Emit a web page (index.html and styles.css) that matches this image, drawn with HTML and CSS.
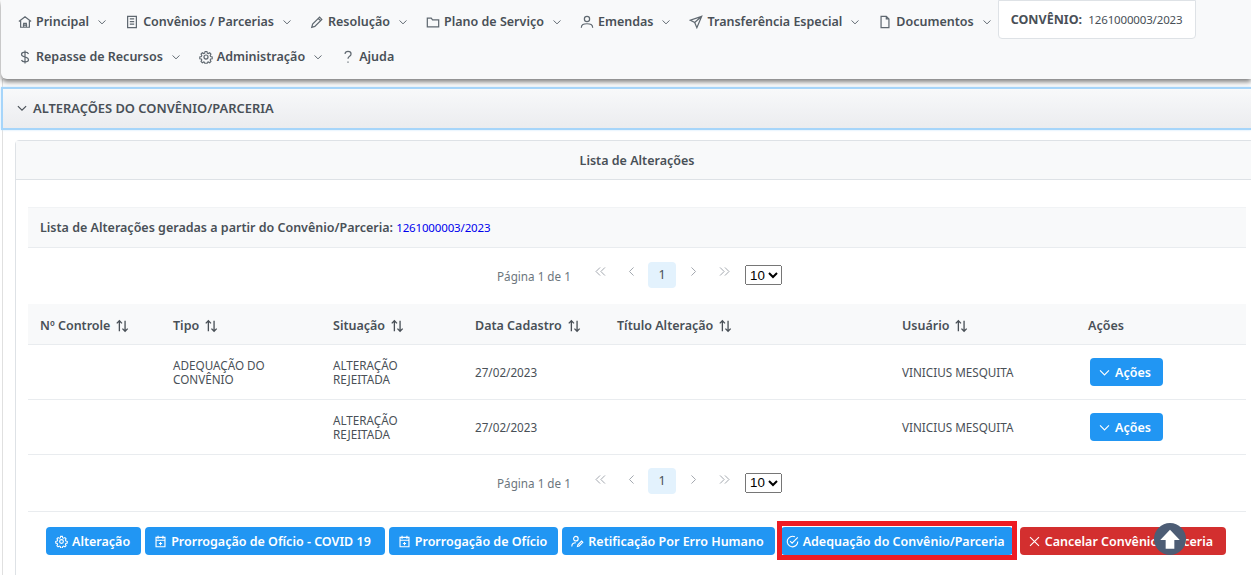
FILE: index.html
```html
<!DOCTYPE html>
<html lang="pt-BR">
<head>
    <meta charset="utf-8">
    <title>Alterações do Convênio/Parceria</title>
    <link rel="stylesheet" href="styles.css">
</head>
<body>
    <svg class="sprite" xmlns="http://www.w3.org/2000/svg">
        <symbol id="i-down" viewBox="0 0 16 16"><path d="M2.500 5.500 8 11l5.500-5.500"/></symbol>
        <symbol id="i-home" viewBox="0 0 16 16"><path d="M1 7.500 8 2l7 5.500M3 6.500V14h10V6.500M6.500 14V9.500h3V14M5.500 11.500h5"/></symbol>
        <symbol id="i-book" viewBox="0 0 16 16"><path d="M3 1.500h10v13H3zM5.500 4.500h5M5.500 7.500h5M5.500 10.500h5"/></symbol>
        <symbol id="i-pencil" viewBox="0 0 16 16"><path d="M11 2.500 13.500 5 5.500 13 2 14l1-3.500zM9.500 4 12 6.500"/></symbol>
        <symbol id="i-folder" viewBox="0 0 16 16"><path d="M1.500 3.500h4.500l1.500 2h7v8h-13z"/></symbol>
        <symbol id="i-user" viewBox="0 0 16 16"><circle cx="8" cy="4.500" r="3"/><path d="M1.500 14.500c0-3.500 2.500-4.500 6.500-4.500s6.500 1 6.500 4.500"/></symbol>
        <symbol id="i-send" viewBox="0 0 16 16"><path d="M14.500 1.500 1.500 6l5 2.500 2.500 6zM6.500 8.500l8-7"/></symbol>
        <symbol id="i-file" viewBox="0 0 16 16"><path d="M3.500 1.500h6l3 3v10h-9zM9.500 1.500v3h3"/></symbol>
        <symbol id="i-dollar" viewBox="0 0 16 16"><path d="M12 4.500C11.500 3 10 2.500 8 2.500 5.500 2.500 4 3.500 4 5s1.500 2.300 4 3c2.500.7 4 1.500 4 3s-1.500 2.500-4 2.500c-2 0-3.500-.5-4-2M8 .5v15"/></symbol>
        <symbol id="i-cog" viewBox="0 0 16 16"><circle cx="8" cy="8" r="2.300"/><path d="M6.800 1h2.400l.4 2 1.300.6 1.800-1 1.600 1.700-1 1.700.6 1.300 2 .5v2.400l-2 .4-.6 1.300 1 1.800-1.600 1.600-1.800-1-1.300.6-.4 2H6.800l-.4-2-1.300-.6-1.800 1-1.600-1.600 1-1.800-.6-1.300-2-.4V7.800l2-.5.6-1.300-1-1.700 1.600-1.700 1.800 1 1.300-.6z" transform="translate(.8 .8) scale(.9)"/></symbol>
        <symbol id="i-question" viewBox="0 0 16 16"><path d="M4.500 4.500C4.800 2.500 6.200 1.500 8 1.500c2 0 3.500 1.300 3.500 3 0 1.500-.8 2.200-2 3-1 .7-1.500 1.300-1.500 2.500M8 13v1.500"/></symbol>
        <symbol id="i-cal" viewBox="0 0 16 16"><path d="M2.500 3h11v11.500h-11zM2.500 6.500h11M5 1v3.500M11 1v3.500M8 8.500v4M6 10.500h4"/></symbol>
        <symbol id="i-useredit" viewBox="0 0 16 16"><circle cx="6" cy="4.500" r="2.800"/><path d="M1 14c0-3 1.500-4.500 5-4.500M8 14l.5-2 4.500-4.500 1.500 1.500-4.500 4.500z"/></symbol>
        <symbol id="i-check" viewBox="0 0 16 16"><path d="M14.500 8A6.500 6.500 0 1 1 11 2.300M5 7.500l2.500 2.500 7-7"/></symbol>
        <symbol id="i-times" viewBox="0 0 16 16"><path d="m2.500 2.500 11 11M13.500 2.500l-11 11"/></symbol>
        <symbol id="i-first" viewBox="0 0 16 16"><path d="M7.500 3 2.500 8l5 5M13.500 3l-5 5 5 5"/></symbol>
        <symbol id="i-prev" viewBox="0 0 16 16"><path d="M10.500 3l-5 5 5 5"/></symbol>
        <symbol id="i-next" viewBox="0 0 16 16"><path d="M5.500 3l5 5-5 5"/></symbol>
        <symbol id="i-last" viewBox="0 0 16 16"><path d="M2.500 3l5 5-5 5M8.500 3l5 5-5 5"/></symbol>
        <symbol id="i-sort" viewBox="0 0 16 16"><path d="M5 14V2M2 5l3-3 3 3M11.500 2v12M8.500 11l3 3 3-3"/></symbol>
    </svg>

    <nav class="menu">
        <a class="menu-item"><svg class="ico"><use href="#i-home"/></svg>Principal<svg class="caret"><use href="#i-down"/></svg></a>
        <a class="menu-item"><svg class="ico"><use href="#i-book"/></svg>Convênios / Parcerias<svg class="caret"><use href="#i-down"/></svg></a>
        <a class="menu-item"><svg class="ico"><use href="#i-pencil"/></svg>Resolução<svg class="caret"><use href="#i-down"/></svg></a>
        <a class="menu-item"><svg class="ico"><use href="#i-folder"/></svg>Plano de Serviço<svg class="caret"><use href="#i-down"/></svg></a>
        <a class="menu-item"><svg class="ico"><use href="#i-user"/></svg>Emendas<svg class="caret"><use href="#i-down"/></svg></a>
        <a class="menu-item"><svg class="ico"><use href="#i-send"/></svg>Transferência Especial<svg class="caret"><use href="#i-down"/></svg></a>
        <a class="menu-item"><svg class="ico"><use href="#i-file"/></svg>Documentos<svg class="caret"><use href="#i-down"/></svg></a>
        <div class="menu-tab"><b>CONVÊNIO:</b> <span class="code">1261000003/2023</span></div>
        <a class="menu-item"><svg class="ico"><use href="#i-dollar"/></svg>Repasse de Recursos<svg class="caret"><use href="#i-down"/></svg></a>
        <a class="menu-item"><svg class="ico"><use href="#i-cog"/></svg>Administração<svg class="caret"><use href="#i-down"/></svg></a>
        <a class="menu-item"><svg class="ico"><use href="#i-question"/></svg>Ajuda</a>
    </nav>

    <main class="content">
        <div class="section-bar"><svg class="section-caret"><use href="#i-down"/></svg>ALTERAÇÕES DO CONVÊNIO/PARCERIA</div>

        <section class="card">
            <h2 class="card-head">Lista de Alterações</h2>
            <div class="card-body">
                <div class="info">Lista de Alterações geradas a partir do Convênio/Parceria: <a class="info-link code">1261000003/2023</a></div>

                <div class="pager">
                    <span class="pager-label">Página 1 de 1</span>
                    <svg class="pager-ico"><use href="#i-first"/></svg>
                    <svg class="pager-ico"><use href="#i-prev"/></svg>
                    <span class="pager-num">1</span>
                    <svg class="pager-ico"><use href="#i-next"/></svg>
                    <svg class="pager-ico"><use href="#i-last"/></svg>
                    <select class="pager-size"><option>10</option></select>
                </div>

                <table class="grid">
                    <thead>
                        <tr>
                            <th class="col-num">Nº Controle<svg class="sort"><use href="#i-sort"/></svg></th>
                            <th class="col-type">Tipo<svg class="sort"><use href="#i-sort"/></svg></th>
                            <th class="col-state">Situação<svg class="sort"><use href="#i-sort"/></svg></th>
                            <th class="col-date">Data Cadastro<svg class="sort"><use href="#i-sort"/></svg></th>
                            <th class="col-title">Título Alteração<svg class="sort"><use href="#i-sort"/></svg></th>
                            <th class="col-user">Usuário<svg class="sort"><use href="#i-sort"/></svg></th>
                            <th class="col-act">Ações</th>
                        </tr>
                    </thead>
                    <tbody>
                        <tr>
                            <td></td>
                            <td>ADEQUAÇÃO DO CONVÊNIO</td>
                            <td>ALTERAÇÃO REJEITADA</td>
                            <td>27/02/2023</td>
                            <td></td>
                            <td>VINICIUS MESQUITA</td>
                            <td class="cell-act"><button class="btn btn-act"><svg class="btn-ico"><use href="#i-down"/></svg>Ações</button></td>
                        </tr>
                        <tr>
                            <td></td>
                            <td></td>
                            <td>ALTERAÇÃO REJEITADA</td>
                            <td>27/02/2023</td>
                            <td></td>
                            <td>VINICIUS MESQUITA</td>
                            <td class="cell-act"><button class="btn btn-act"><svg class="btn-ico"><use href="#i-down"/></svg>Ações</button></td>
                        </tr>
                    </tbody>
                </table>

                <div class="pager pager-bottom">
                    <span class="pager-label">Página 1 de 1</span>
                    <svg class="pager-ico"><use href="#i-first"/></svg>
                    <svg class="pager-ico"><use href="#i-prev"/></svg>
                    <span class="pager-num">1</span>
                    <svg class="pager-ico"><use href="#i-next"/></svg>
                    <svg class="pager-ico"><use href="#i-last"/></svg>
                    <select class="pager-size"><option>10</option></select>
                </div>

                <div class="actions">
                    <button class="btn"><svg class="btn-ico"><use href="#i-cog"/></svg>Alteração</button>
                    <button class="btn btn-wide"><svg class="btn-ico"><use href="#i-cal"/></svg>Prorrogação de Ofício - COVID 19</button>
                    <button class="btn"><svg class="btn-ico"><use href="#i-cal"/></svg>Prorrogação de Ofício</button>
                    <button class="btn"><svg class="btn-ico"><use href="#i-useredit"/></svg>Retificação Por Erro Humano</button>
                    <button class="btn btn-marked"><svg class="btn-ico"><use href="#i-check"/></svg>Adequação do Convênio/Parceria</button>
                    <button class="btn btn-danger"><svg class="btn-ico"><use href="#i-times"/></svg>Cancelar Convênio/Parceria</button>
                </div>
            </div>
        </section>
    </main>

    <a class="scroll-top">
        <svg viewBox="0 0 24 24"><path d="M12 3.500 21 13h-5v8H8v-8H3z"/></svg>
    </a>
</body>
</html>
```
FILE: styles.css
```css
html, body {
    height: 575px;
    margin: 0;
    overflow: hidden;
}

body {
    width: 1251px;
    background: #fff;
    color: #495057;
    font-family: "Noto Sans", sans-serif;
    font-size: 12.5px;
}

.sprite {
    display: none;
}

svg {
    fill: none;
    stroke: currentColor;
    stroke-width: 1.2;
    flex: none;
}

.code {
    font-size: 11.5px;
    font-weight: 400;
    letter-spacing: -0.15px;
}

/* top menu */
.menu {
    position: relative;
    z-index: 2;
    display: flex;
    flex-wrap: wrap;
    align-content: flex-start;
    height: 79px;
    box-sizing: border-box;
    margin-left: 1px;
    padding: 4px 0 0 8px;
    background: #f8f9fa;
    border-radius: 0 0 0 6px;
    box-shadow: 0 3px 5px rgba(0, 0, 0, 0.5);
}

.menu-item {
    display: flex;
    align-items: center;
    height: 35px;
    padding: 0 9px;
    font-weight: 600;
}

.ico {
    width: 14px;
    height: 14px;
    margin-right: 4px;
    color: #5f6870;
    stroke-width: 1.4;
}

.caret {
    width: 10px;
    height: 10px;
    margin-left: 8px;
    color: #5f6870;
    stroke-width: 1.6;
}

.menu-tab {
    align-self: flex-start;
    height: 39px;
    width: 198px;
    box-sizing: border-box;
    margin: -4px 0 0 -3px;
    padding: 0 12px;
    line-height: 38px;
    white-space: nowrap;
    background: #fff;
    border: 1px solid #dee2e6;
    border-radius: 0 0 4px 4px;
}

.menu-tab .code {
    margin-left: 3px;
}

/* section */
.content {
    min-height: 496px;
    margin-left: 2px;
    padding-top: 8px;
    border-left: 1px solid #e0e0e0;
}

.section-bar {
    display: flex;
    align-items: center;
    height: 37px;
    margin-left: -2px;
    padding: 0 0 2px 13px;
    font-size: 12.9px;
    font-weight: 600;
    background: linear-gradient(#f8f9fa, #ebecef);
    border: 2px solid #a6d5fa;
    border-right: 0;
    box-shadow: 0 0 2px #c5e3fb;
}

.section-caret {
    width: 12px;
    height: 12px;
    margin-right: 5px;
    stroke-width: 1.5;
}

.card {
    width: 1244px;
    box-sizing: border-box;
    margin: 10px 0 0 12px;
    border: 1px solid #dee2e6;
    border-radius: 4px 4px 0 0;
}

.card-head {
    height: 38px;
    margin: 0;
    font-size: 12.5px;
    font-weight: 600;
    line-height: 39px;
    text-align: center;
    background: #f8f9fa;
    border-bottom: 1px solid #dee2e6;
}

.card-body {
    padding: 27px 12px 40px;
}

.info {
    height: 39px;
    padding-left: 12px;
    font-weight: 600;
    line-height: 39px;
    background: #f8f9fa;
    border-top: 1px solid #f1f3f5;
    border-bottom: 1px solid #e9ecef;
}

.info-link {
    color: #0000ee;
}

/* pagination */
.pager {
    display: flex;
    align-items: center;
    justify-content: center;
    height: 26px;
    padding: 14px 0 16px 5px;
}

.pager-bottom {
    padding: 13px 0 17px 5px;
    border-bottom: 1px solid #e9ecef;
}

.pager-label {
    width: 87.5px;
    margin-top: 2px;
    color: #6c757d;
    font-size: 11.7px;
}

.pager-ico {
    width: 13px;
    height: 13px;
    margin: -7px 9px 0;
    color: #a0a6ad;
}

.pager-num {
    width: 28px;
    height: 26px;
    margin: 0 1.500px;
    line-height: 26px;
    text-align: center;
    background: #e3f2fd;
    border-radius: 4px;
}

.pager-size {
    width: 37px;
    height: 20px;
    margin-left: 5.500px;
    padding: 0;
}

.pager-bottom .pager-label,
.pager-bottom .pager-size {
    margin-top: 4px;
}

.pager-bottom .pager-ico {
    margin-top: -3px;
}

/* table */
.grid {
    width: 1218px;
    table-layout: fixed;
    border-collapse: collapse;
}

.grid th {
    box-sizing: border-box;
    height: 40px;
    padding: 3px 12px 0;
    font-weight: 600;
    text-align: left;
    background: #f8f9fa;
    border-bottom: 1px solid #e9ecef;
}

.grid td {
    box-sizing: border-box;
    height: 55px;
    padding: 1px 12px 0;
    font-size: 11.7px;
    line-height: 14.5px;
    border-bottom: 1px solid #e9ecef;
}

.grid .cell-act {
    padding-top: 0;
}

.col-num { width: 133px; }
.col-type { width: 160px; }
.col-state { width: 142px; }
.col-date { width: 142px; }
.col-title { width: 285px; }
.col-user { width: 186px; }
.col-act { width: 170px; }

.sort {
    width: 14px;
    height: 14px;
    margin-left: 5px;
    vertical-align: -3px;
    stroke-width: 1.5;
}

/* buttons */
.btn {
    display: inline-flex;
    align-items: center;
    height: 28px;
    padding: 1px 11px 0 9px;
    color: #fff;
    font-family: inherit;
    font-size: 12.5px;
    font-weight: 600;
    white-space: nowrap;
    background: #2196f3;
    border: 0;
    border-radius: 4px;
}

.btn-ico {
    width: 13px;
    height: 13px;
    margin-right: 4px;
    stroke-width: 1.4;
}

.btn-act {
    margin-left: 2px;
    padding: 1px 12px 0 8px;
}

.btn-wide {
    padding-right: 14px;
}

.btn-danger {
    margin-left: 3px;
    padding: 1px 13px 0 8px;
    background: #d32f2f;
}

.actions {
    display: flex;
    gap: 4px;
    padding: 15px 0 0 18px;
}

/* red frame drawn over the highlighted button */
.btn-marked {
    position: relative;
    margin-left: 2px;
    padding: 1px 8px 0 5px;
}

.btn-marked::after {
    content: "";
    position: absolute;
    inset: -6px -4px -5px -4px;
    border: 5px solid #ed1c24;
}

.scroll-top {
    position: fixed;
    left: 1154px;
    top: 523px;
    display: flex;
    align-items: center;
    justify-content: center;
    width: 32px;
    height: 32px;
    background: #4d5d75;
    border-radius: 50%;
}

.scroll-top svg {
    width: 26px;
    height: 26px;
    fill: #fff;
    stroke: none;
}
```
